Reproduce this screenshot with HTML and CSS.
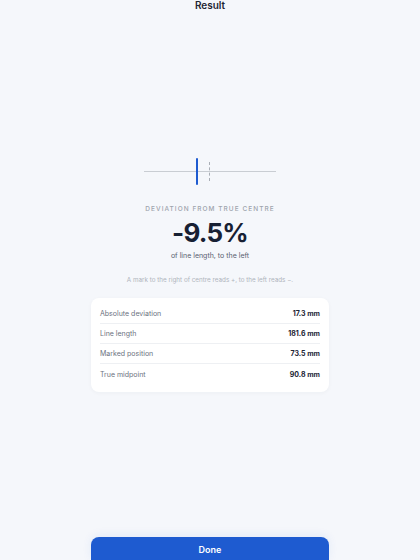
FILE: index.html
```html
<!DOCTYPE html>
<html lang="en">
  <head>
    <meta charset="UTF-8" />
    <meta name="viewport" content="width=device-width, initial-scale=1.0" />
    <title>Result</title>
    <link rel="stylesheet" href="styles.css">
  </head>
  <body>
    <div class="app">
      <header class="topbar">
        <h1>Result</h1>
      </header>
      <main class="result">
        <div class="gauge">
          <div class="gauge-line"></div>
          <div class="gauge-centre"></div>
          <div class="gauge-mark" style="left: 40.5%"></div>
        </div>
        <p class="eyebrow">Deviation from true centre</p>
        <p class="big-value">-9.5%</p>
        <p class="sub">of line length, to the left</p>
        <p class="note">A mark to the right of centre reads +, to the left reads −.</p>
        <div class="card">
          <div class="row">
            <span class="label">Absolute deviation</span>
            <span class="value">17.3 mm</span>
          </div>
          <div class="row">
            <span class="label">Line length</span>
            <span class="value">181.6 mm</span>
          </div>
          <div class="row">
            <span class="label">Marked position</span>
            <span class="value">73.5 mm</span>
          </div>
          <div class="row">
            <span class="label">True midpoint</span>
            <span class="value">90.8 mm</span>
          </div>
        </div>
      </main>
      <footer class="actions">
        <button class="done">Done</button>
      </footer>
    </div>
  </body>
</html>
```

FILE: styles.css
```css
html,
body {
  margin: 0;
  height: 100%;
  overflow: hidden;
}
body {
  background-color: #f5f7fb;
  font-family: Inter, "Noto Sans", sans-serif;
  color: #1a2233;
}
p {
  margin: 0;
}
.app {
  display: flex;
  flex-direction: column;
  height: 561px;
}
.topbar h1 {
  margin: 0;
  font-size: 10px;
  line-height: 10px;
  font-weight: 600;
  text-align: center;
  color: #1f2633;
}
.result {
  flex: 1;
  display: flex;
  flex-direction: column;
  align-items: center;
  padding-top: 148px;
}

/* line with the true centre dashed and the user's mark in blue */
.gauge {
  position: relative;
  width: 132px;
  height: 27px;
}
.gauge-line {
  position: absolute;
  left: 0;
  right: 0;
  top: 13px;
  height: 1px;
  background-color: #c9cdd3;
}
.gauge-centre {
  position: absolute;
  left: 65px;
  top: 4px;
  height: 19px;
  border-left: 1px dashed #a9aeb6;
}
.gauge-mark {
  position: absolute;
  top: 0;
  width: 2px;
  height: 27px;
  margin-left: -1px;
  background-color: #1e5bd0;
  border-radius: 1px;
}

.eyebrow {
  margin-top: 20px;
  font-size: 6.5px;
  line-height: 8px;
  font-weight: 500;
  letter-spacing: 0.16em;
  text-transform: uppercase;
  color: #9ea4ad;
}
.big-value {
  margin-top: 4px;
  font-size: 26px;
  line-height: 32px;
  font-weight: 700;
  letter-spacing: -0.03em;
  color: #172033;
}
.sub {
  margin-top: 2px;
  font-size: 7px;
  line-height: 10px;
  color: #596170;
}
.note {
  margin-top: 15px;
  font-size: 6.3px;
  line-height: 8px;
  color: #afb4bc;
}
.card {
  margin-top: 14px;
  width: 238px;
  box-sizing: border-box;
  padding: 6px 9px 8px;
  background-color: #ffffff;
  border-radius: 8px;
  box-shadow: 0 1px 4px rgba(30, 40, 60, 0.04);
}
.row {
  display: flex;
  justify-content: space-between;
  align-items: center;
  box-sizing: border-box;
  height: 20px;
  font-size: 7px;
  border-bottom: 1px solid #eef0f3;
}
.row:last-child {
  border-bottom: none;
}
.label {
  color: #6b7280;
}
.value {
  font-weight: 700;
  color: #1c2434;
}

.actions {
  display: flex;
  justify-content: center;
}
.done {
  width: 238px;
  height: 24px;
  border: none;
  border-radius: 8px 8px 0 0;
  background-color: #1e5bd0;
  color: #ffffff;
  font-family: inherit;
  font-size: 9px;
  font-weight: 600;
  box-shadow: 0 -2px 10px rgba(30, 91, 208, 0.08);
}
```
